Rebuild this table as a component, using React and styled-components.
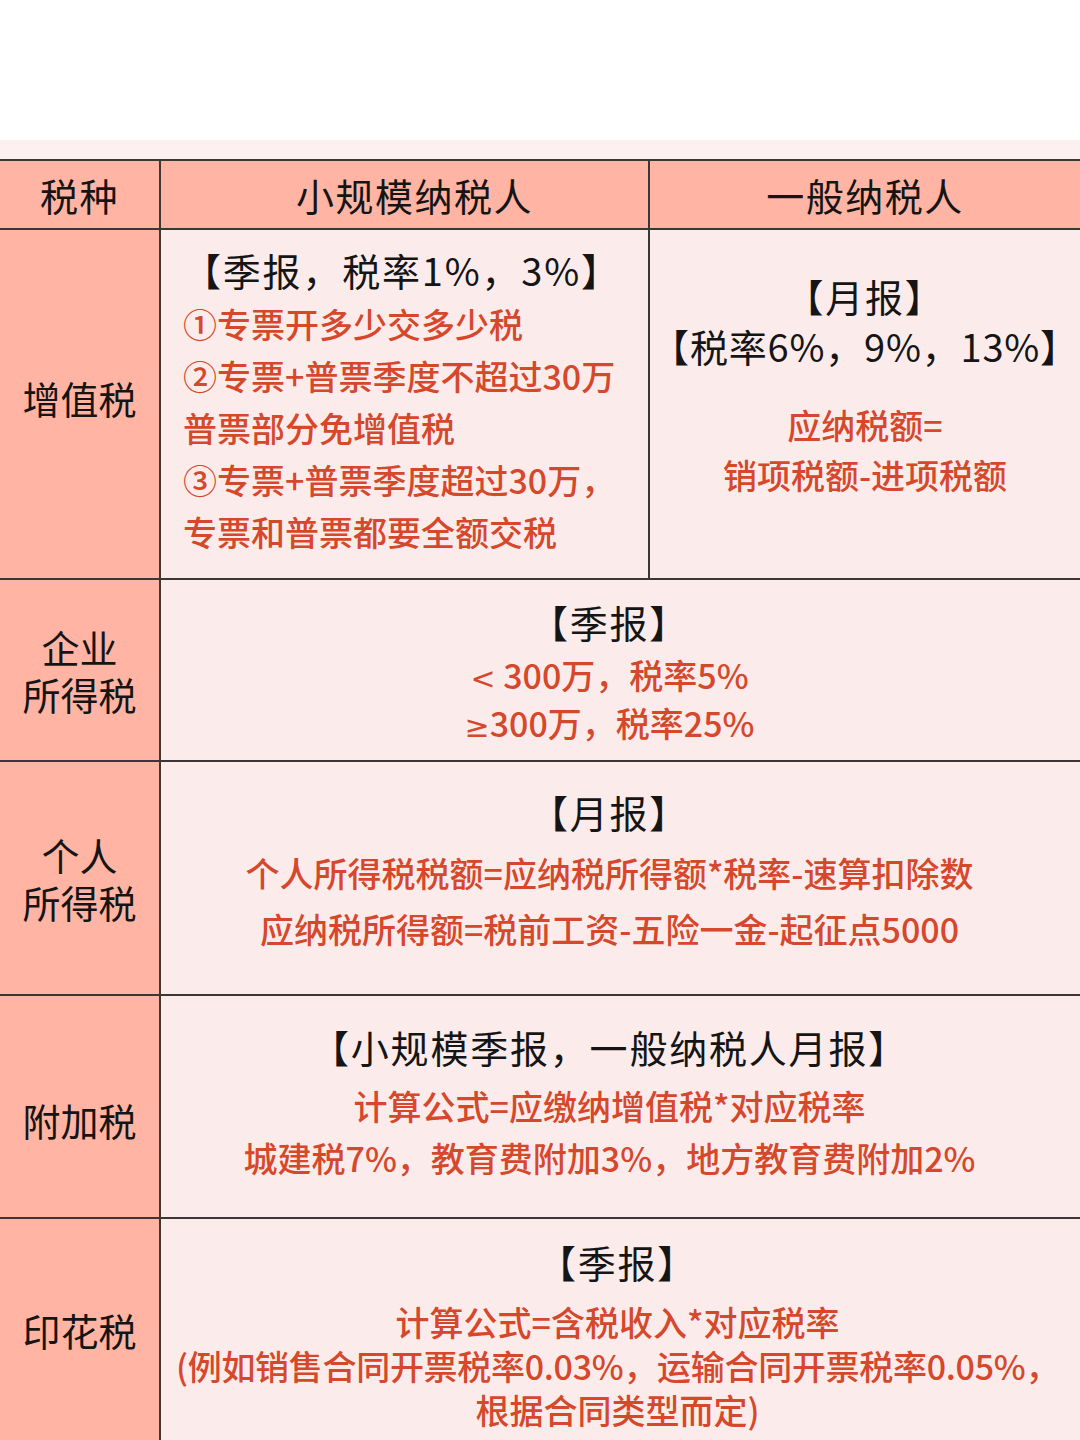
import React from "react";
import styled, { createGlobalStyle } from "styled-components";

const Global = createGlobalStyle`
  html, body { margin: 0; padding: 0; background: #ffffff; }
  body { font-family: "Noto Sans CJK SC", "Noto Sans", sans-serif; }
  * { box-sizing: border-box; }
`;

const Page = styled.div`
  width: 1080px;
  overflow: hidden;
`;

const TopSpace = styled.div`
  height: 140px;
  background: #ffffff;
`;

const Band = styled.div`
  height: 19px;
  background: #fcf1f0;
`;

const Table = styled.div`
  display: grid;
  grid-template-columns: 159px 487px 1fr;
  grid-template-rows: 67px 348px 180px 232px 221px 236px;
  gap: 2px;
  background: #3d3636;
  border-top: 2px solid #3d3636;
`;

const HeadCell = styled.div`
  background: #ffb4a4;
  display: flex;
  align-items: center;
  justify-content: center;
  font-size: 38px;
  line-height: 1;
  letter-spacing: 1.5px;
  color: #151515;
  padding-left: ${(p) => p.$shift || 0}px;
`;

const NameCell = styled.div`
  background: #ffb4a4;
  display: flex;
  flex-direction: column;
  align-items: center;
  justify-content: center;
  font-size: 38px;
  line-height: 47px;
  color: #151515;
  padding-bottom: ${(p) => p.$lift || 0}px;
  padding-top: ${(p) => p.$drop || 0}px;
`;

const Cell = styled.div`
  background: #fbeceb;
  display: flex;
  flex-direction: column;
  align-items: ${(p) => (p.$left ? "flex-start" : "center")};
  padding-top: ${(p) => p.$top}px;
  padding-left: ${(p) => (p.$left ? 22 : 0)}px;
  padding-right: ${(p) => (p.$wide ? (p.$pr != null ? p.$pr : 22) : 0)}px;
  grid-column: ${(p) => (p.$wide ? "2 / 4" : "auto")};
  white-space: nowrap;
  overflow: hidden;
`;

const Title = styled.div`
  font-size: 38px;
  line-height: ${(p) => p.$lh || 50}px;
  letter-spacing: ${(p) => (p.$ls != null ? p.$ls : 1.8)}px;
  color: #151515;
`;

const Red = styled.div`
  font-size: 34px;
  font-weight: 500;
  line-height: ${(p) => p.$lh}px;
  letter-spacing: ${(p) => p.$ls || 0}px;
  color: #d6482b;
  margin-top: ${(p) => p.$mt || 0}px;
`;

const MathSign = styled.span`
  font-family: "DejaVu Sans", "Noto Sans", sans-serif;
  font-size: 30px;
`;

export default function App() {
  return (
    <Page>
      <Global />
      <TopSpace />
      <Band />
      <Table>
        <HeadCell>税种</HeadCell>
        <HeadCell $shift={20}>小规模纳税人</HeadCell>
        <HeadCell>一般纳税人</HeadCell>

        <NameCell $lift={14}>增值税</NameCell>
        <Cell $left $top={12}>
          <Title $lh={56}>【季报，税率1%，3%】</Title>
          <Red $lh={52}>①专票开多少交多少税</Red>
          <Red $lh={52}>②专票+普票季度不超过30万</Red>
          <Red $lh={52}>普票部分免增值税</Red>
          <Red $lh={52}>③专票+普票季度超过30万，</Red>
          <Red $lh={52}>专票和普票都要全额交税</Red>
        </Cell>
        <Cell $top={41}>
          <Title>【月报】</Title>
          <Title $ls={0.8}>【税率6%，9%，13%】</Title>
          <Red $lh={50} $mt={29}>应纳税额=</Red>
          <Red $lh={50}>销项税额-进项税额</Red>
        </Cell>

        <NameCell>
          <span>企业</span>
          <span>所得税</span>
        </NameCell>
        <Cell $wide $top={17}>
          <Title>【季报】</Title>
          <Red $lh={44} $mt={6}><MathSign>&lt;</MathSign> 300万，税率5%</Red>
          <Red $lh={44}><MathSign>≥</MathSign>300万，税率25%</Red>
        </Cell>

        <NameCell>
          <span>个人</span>
          <span>所得税</span>
        </NameCell>
        <Cell $wide $top={25}>
          <Title>【月报】</Title>
          <Red $lh={56} $mt={8}>个人所得税税额=应纳税所得额*税率-速算扣除数</Red>
          <Red $lh={56}>应纳税所得额=税前工资-五险一金-起征点5000</Red>
        </Cell>

        <NameCell $drop={26}>附加税</NameCell>
        <Cell $wide $top={26}>
          <Title>【小规模季报，一般纳税人月报】</Title>
          <Red $lh={52} $mt={8}>计算公式=应缴纳增值税*对应税率</Red>
          <Red $lh={52}>城建税7%，教育费附加3%，地方教育费附加2%</Red>
        </Cell>

        <NameCell $lift={16}>印花税</NameCell>
        <Cell $wide $pr={6} $top={18}>
          <Title>【季报】</Title>
          <Red $lh={44} $mt={13}>计算公式=含税收入*对应税率</Red>
          <Red $lh={44} $ls={-0.3}>(例如销售合同开票税率0.03%，运输合同开票税率0.05%，</Red>
          <Red $lh={44}>根据合同类型而定)</Red>
        </Cell>
      </Table>
    </Page>
  );
}
